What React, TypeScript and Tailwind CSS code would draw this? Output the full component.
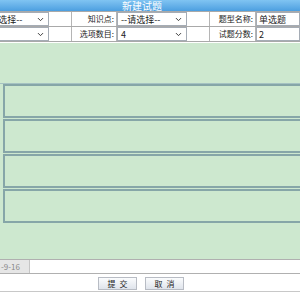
import { ChevronDown } from "lucide-react";

const font = { fontFamily: '"Noto Sans CJK SC", "Noto Sans", sans-serif' };

function Select({ value }: { value: string }) {
  return (
    <div className="flex h-[14px] w-[70px] items-center justify-between border border-[#a5acb5] bg-white pl-[3px] pr-[3px] text-[9px] leading-none text-[#222]">
      <span>{value}</span>
      <ChevronDown className="h-[9px] w-[9px] text-[#333]" strokeWidth={2.5} />
    </div>
  );
}

function Label({ text }: { text: string }) {
  return (
    <div className="flex h-[14px] items-center justify-end border-r border-[#b5b5b5] pr-[2px] text-[8px] leading-none text-[#222]">
      {text}
    </div>
  );
}

function AnswerBox() {
  return (
    <div className="ml-[3px] h-[34px] border-y-2 border-l-2 border-[#86a6a8] bg-[#cde8cf]" />
  );
}

export default function App() {
  return (
    <div className="h-[300px] w-[300px] overflow-hidden bg-white" style={font}>
      {/* title bar */}
      <div className="flex h-[11px] items-center bg-gradient-to-b from-[#80c4f2] to-[#4c9fe0] pl-[122px] text-[10px] leading-[11px] text-white">
        新建试题
      </div>

      {/* header fields */}
      <div className="border-y border-[#a9a9a9]">
        <div className="grid grid-cols-[72px_45px_93px_46px_44px] border-b border-[#a9a9a9]">
          <div className="relative border-r border-[#b5b5b5]">
            <div className="absolute -left-[21px] top-0">
              <Select value="--请选择--" />
            </div>
          </div>
          <Label text="知识点:" />
          <div className="border-r border-[#b5b5b5]">
            <Select value="--请选择--" />
          </div>
          <Label text="题型名称:" />
          <div className="flex h-[14px] items-center border border-[#a5acb5] pl-[2px] text-[9px] leading-none text-[#222]">
            单选题
          </div>
        </div>
        <div className="grid grid-cols-[72px_45px_93px_46px_44px]">
          <div className="relative h-[14px] border-r border-[#b5b5b5]">
            <div className="absolute -left-[21px] top-0">
              <Select value="" />
            </div>
          </div>
          <Label text="选项数目:" />
          <div className="border-r border-[#b5b5b5]">
            <Select value="4" />
          </div>
          <Label text="试题分数:" />
          <div className="flex h-[14px] items-center border border-[#a5acb5] pl-[2px] text-[9px] leading-none text-[#222]">
            2
          </div>
        </div>
      </div>

      {/* question body */}
      <div className="mt-[1px] flex h-[216px] flex-col bg-[#cde8cf]">
        <div className="h-[41px] border-b border-[#a5c2c2]" />
        <div className="flex flex-col gap-[1px]">
          <AnswerBox />
          <AnswerBox />
          <AnswerBox />
          <AnswerBox />
        </div>
      </div>

      {/* date */}
      <div className="flex h-[15px] border-y border-[#b0b0b0]">
        <div className="flex w-[30px] items-center border-r border-[#c5c5c5] bg-[#e6e6e6] pl-[1px] text-[8px] leading-none text-[#888]">
          -9-16
        </div>
      </div>

      {/* actions */}
      <div className="flex h-[18px] items-center gap-[8px] border-b border-[#c8c8c8] pl-[98px] pt-[2px]">
        <button className="flex h-[13px] w-[39px] items-center justify-center gap-[4px] border border-[#b8bcc4] bg-gradient-to-b from-[#fbfcfd] to-[#dfe4ec] text-[8px] leading-none text-[#222]">
          <span>提</span>
          <span>交</span>
        </button>
        <button className="flex h-[13px] w-[39px] items-center justify-center gap-[4px] border border-[#b8bcc4] bg-gradient-to-b from-[#fbfcfd] to-[#dfe4ec] text-[8px] leading-none text-[#222]">
          <span>取</span>
          <span>消</span>
        </button>
      </div>
    </div>
  );
}
